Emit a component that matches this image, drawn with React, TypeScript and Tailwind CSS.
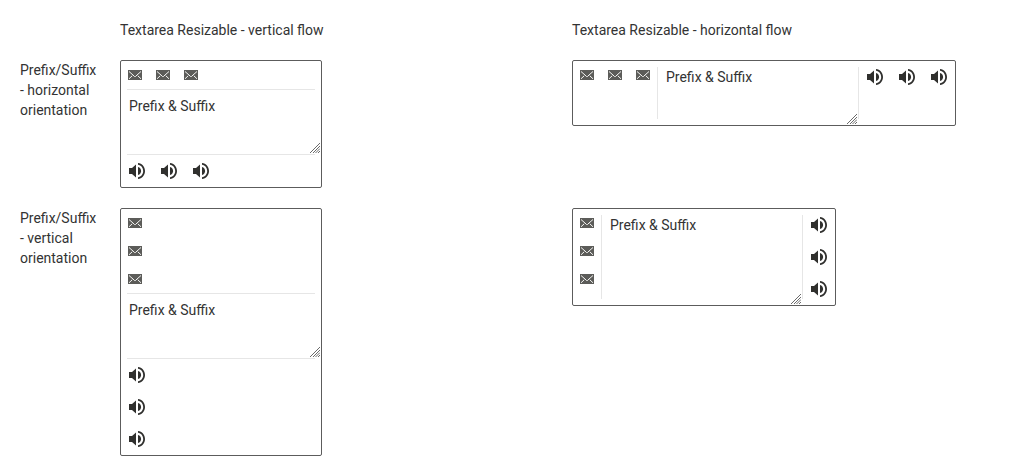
import React from "react";

type Axis = "row" | "column";

function MailIcon() {
  return (
    <svg viewBox="0 0 14 14" className="block size-[14px]" aria-hidden="true">
      <rect x="0" y="2" width="14" height="10" fill="#5c5c59" />
      <path
        d="M1 3.500L5 7l1.500 1.500h1L9 7l4-3.500M1 10.800l3.200-3M13 10.800l-3.200-3"
        fill="none"
        stroke="#f4f4f2"
        strokeWidth="1"
      />
    </svg>
  );
}

function VolumeIcon() {
  return (
    <svg viewBox="0 0 16 16" className="block size-4" fill="#30302e" aria-hidden="true">
      <path d="M0 5h3l4-3.500v13L3 11H0z" />
      <path d="M9 4c2 .6 3.100 2.100 3.100 4S11 11.400 9 12z" />
      <path d="M9 0c4 .3 7 3.800 7 8s-3 7.700-7 8v-1.700c3-.4 5.200-3.100 5.200-6.300S12 2.100 9 1.700z" />
    </svg>
  );
}

function ResizeGrip() {
  return (
    <svg
      viewBox="0 0 10 10"
      className="pointer-events-none absolute right-px bottom-px size-[10px]"
      stroke="#6b6b6b"
      strokeWidth="1"
      aria-hidden="true"
    >
      <path d="M0 10L10 0M3 10l7-7M5.500 10l4.500-4.500M8 10l2-2" />
    </svg>
  );
}

const items = [1, 2, 3];

function Adornments({ kind, orientation }: { kind: "prefix" | "suffix"; orientation: Axis }) {
  const mail = kind === "prefix";
  return (
    <div className={orientation === "row" ? "flex items-start" : "flex flex-col items-start"}>
      {items.map((n) => (
        <button
          key={n}
          type="button"
          aria-label={(mail ? "Mail " : "Volume ") + n}
          className={mail ? "p-[7px]" : "p-2"}
        >
          {mail ? <MailIcon /> : <VolumeIcon />}
        </button>
      ))}
    </div>
  );
}

function Separator({ flow }: { flow: Axis }) {
  return (
    <span
      className={
        flow === "row" ? "my-1.5 w-px shrink-0 bg-[#e6e6e6]" : "mx-1.5 h-px shrink-0 bg-[#e6e6e6]"
      }
    />
  );
}

function TextArea({ flow, orientation, label }: { flow: Axis; orientation: Axis; label: string }) {
  return (
    <div
      className={
        flow === "row"
          ? "inline-flex rounded-xs border border-[#5c5c5c] align-top"
          : "inline-flex flex-col rounded-xs border border-[#5c5c5c] align-top"
      }
    >
      <Adornments kind="prefix" orientation={orientation} />
      <Separator flow={flow} />
      <div className="relative flex">
        <textarea
          aria-label={label}
          defaultValue="Prefix & Suffix"
          className="block min-h-16 w-50 resize overflow-auto bg-transparent px-2 py-1.5 leading-5 outline-none [&::-webkit-resizer]:bg-transparent"
        />
        <ResizeGrip />
      </div>
      <Separator flow={flow} />
      <Adornments kind="suffix" orientation={orientation} />
    </div>
  );
}

export default function App() {
  return (
    <main className="grid grid-cols-[80px_1fr_1fr] gap-5 bg-white p-5 font-['Roboto',sans-serif] text-sm leading-5 text-[#333333]">
      <span />
      <h2>Textarea Resizable - vertical flow</h2>
      <h2>Textarea Resizable - horizontal flow</h2>

      <h3>Prefix/Suffix - horizontal orientation</h3>
      <div>
        <TextArea flow="column" orientation="row" label="Vertical flow, horizontal orientation" />
      </div>
      <div>
        <TextArea flow="row" orientation="row" label="Horizontal flow, horizontal orientation" />
      </div>

      <h3>Prefix/Suffix - vertical orientation</h3>
      <div>
        <TextArea flow="column" orientation="column" label="Vertical flow, vertical orientation" />
      </div>
      <div>
        <TextArea flow="row" orientation="column" label="Horizontal flow, vertical orientation" />
      </div>
    </main>
  );
}
